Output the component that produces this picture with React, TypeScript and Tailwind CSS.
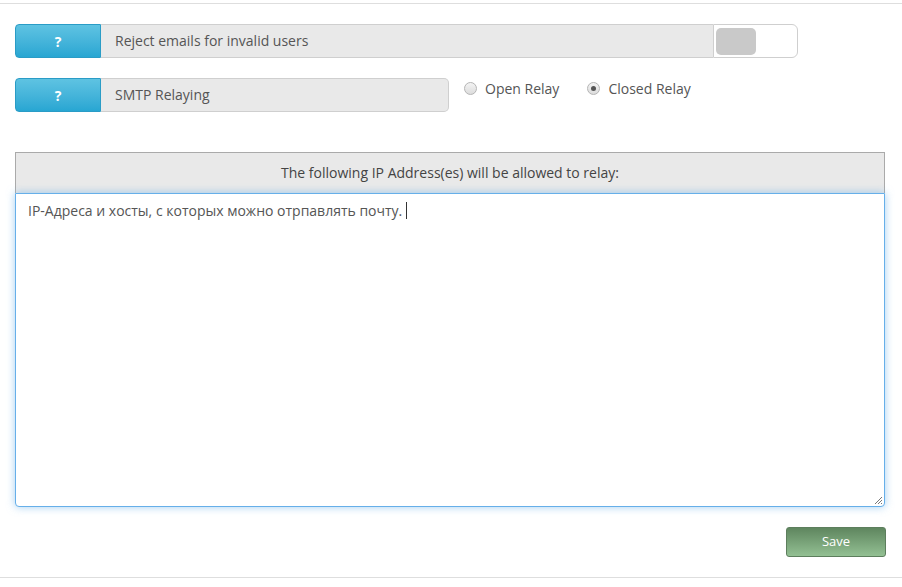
import { useState } from 'react';

function HelpButton() {
  return (
    <button className="w-[86px] h-full flex items-center justify-center rounded-l-[4px] bg-gradient-to-b from-[#5ec3e2] to-[#27a6d2] text-white font-bold text-[14px] border border-[#2a9cc6]">
      ?
    </button>
  );
}

function Radio({ checked, label, onClick }: { checked: boolean; label: string; onClick: () => void }) {
  return (
    <label className="flex items-center gap-[8px] cursor-pointer" onClick={onClick}>
      <span className="w-[13px] h-[13px] rounded-full border border-[#b5b5b5] bg-gradient-to-b from-[#f4f4f4] to-[#dcdcdc] flex items-center justify-center">
        {checked && <span className="w-[5px] h-[5px] rounded-full bg-[#555]" />}
      </span>
      <span className="text-[14px] text-[#555]">{label}</span>
    </label>
  );
}

export default function App() {
  const [relay, setRelay] = useState<'open' | 'closed'>('closed');

  return (
    <div className="w-[902px] h-[587px] bg-white font-['Open_Sans',sans-serif] text-[#555]">
      <div className="h-[4px] border-b border-[#dedede]" />

      <div className="px-[15px]">
        {/* reject emails */}
        <div className="flex h-[34px] mt-[20px] w-[783px]">
          <HelpButton />
          <div className="flex-1 flex items-center pl-[14px] pb-[2px] bg-[#e9e9e9] border-y border-[#cfcfcf] text-[14px]">
            Reject emails for invalid users
          </div>
          <div className="w-[85px] flex items-center pl-[2px] bg-white border border-[#cfcfcf] rounded-r-[6px]">
            <div className="w-[40px] h-[27px] rounded-[5px] bg-[#c9c9c9]" />
          </div>
        </div>

        {/* smtp relaying */}
        <div className="flex items-center mt-[20px]">
          <div className="flex h-[34px] w-[434px]">
            <HelpButton />
            <div className="flex-1 flex items-center pl-[14px] pb-[2px] bg-[#e9e9e9] border border-l-0 border-[#cfcfcf] rounded-r-[5px] text-[14px]">
              SMTP Relaying
            </div>
          </div>
          <div className="flex items-center gap-[28px] ml-[15px] -mt-[13px]">
            <Radio checked={relay === 'open'} label="Open Relay" onClick={() => setRelay('open')} />
            <Radio checked={relay === 'closed'} label="Closed Relay" onClick={() => setRelay('closed')} />
          </div>
        </div>

        {/* allowed IPs */}
        <div className="mt-[40px] w-[870px]">
          <div className="h-[41px] flex items-center justify-center pb-[1px] bg-[#e9e9e9] border border-b-0 border-[#aaaaaa] text-[14px] text-[#444]">
            The following IP Address(es) will be allowed to relay:
          </div>
          <div className="relative h-[314px] bg-white border border-[#66afe9] rounded-b-[4px] shadow-[0_0_8px_rgba(102,175,233,0.6)] px-[12px] py-[6px] text-[14px] text-[#555]">
            IP-Адреса и хосты, с которых можно отрпавлять почту.
            <span className="inline-block w-px h-[17px] bg-[#333] align-[-3px] ml-[4px]" />
            <svg className="absolute right-[1px] bottom-[1px]" width="10" height="10" viewBox="0 0 10 10">
              <path d="M9 2 L2 9 M9 5 L5 9 M9 8 L8 9" stroke="#777" strokeWidth="1" />
            </svg>
          </div>
        </div>

        <div className="flex justify-end mt-[20px] w-[871px]">
          <button className="w-[100px] h-[30px] rounded-[3px] border border-[#5d7e5d] bg-gradient-to-b from-[#5f865f] to-[#93c093] text-white text-[13px]">
            Save
          </button>
        </div>
      </div>

      <div className="mt-[20px] border-t border-[#dedede]" />
    </div>
  );
}
